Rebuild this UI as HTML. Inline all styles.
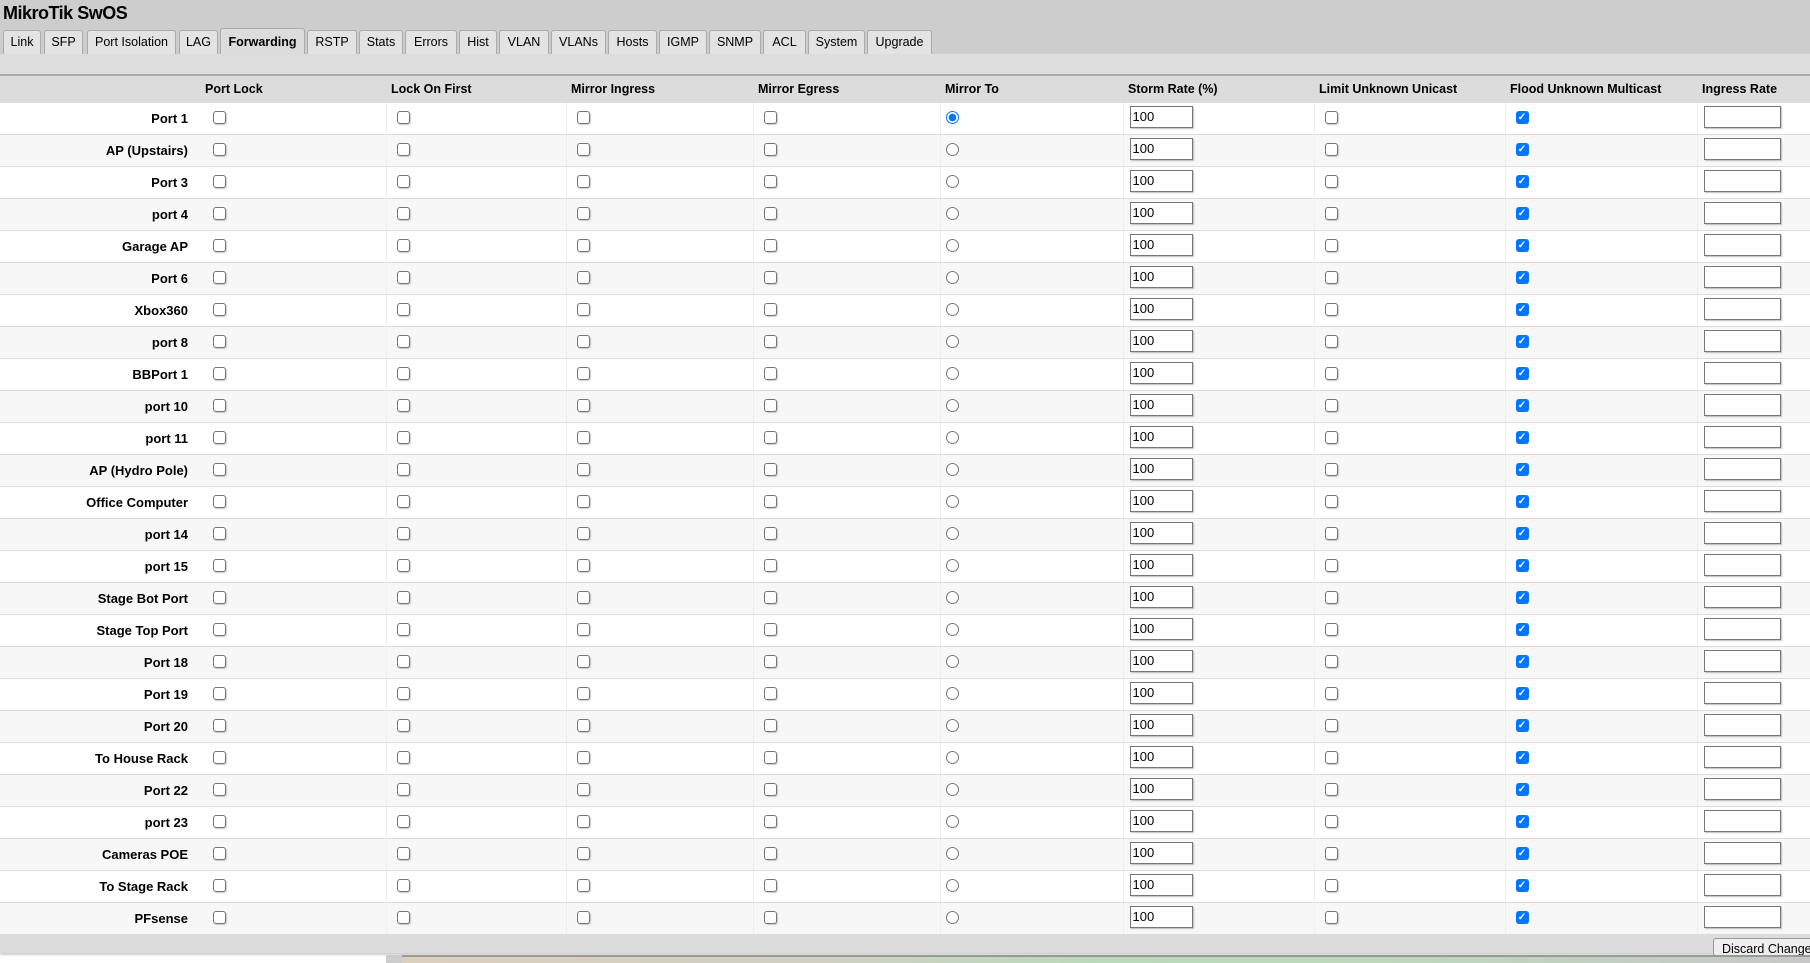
<!DOCTYPE html>
<html><head><meta charset="utf-8"><style>
*{box-sizing:border-box}
body{margin:0;width:1810px;height:963px;overflow:hidden;background:#fff;font-family:"Liberation Sans",Arial,sans-serif;font-size:13px;color:#000;position:relative}
#top{position:absolute;left:0;top:0;width:1810px;height:54px;background:#cdcdcd}
#title{position:absolute;left:3px;top:3px;font-size:18px;font-weight:bold;letter-spacing:-0.5px}
.tab{position:absolute;top:30px;height:24px;background:#e3e3e3;border:1px solid #aaa;border-bottom:none;border-radius:3px 3px 0 0;font-size:12.5px;text-align:center;line-height:22px}
.tab.a{background:#dcdcdc;font-weight:bold;top:28px;height:27px;line-height:26px}
#band{position:absolute;left:0;top:54px;width:1810px;height:22px;background:#dddddd;border-bottom:2px solid #aaa}
table{position:absolute;left:0;top:76px;width:1810px;border-collapse:collapse;table-layout:fixed}
th{height:26px;background:#dcdcdc;text-align:left;font-size:12.5px;padding:0 0 0 5px;border-bottom:1px solid #ddd}
td{height:32px;border-bottom:1px solid #ddd;border-right:1px solid #eee;padding:0 0 3px 10px;vertical-align:middle}
tr:nth-child(odd) td{background:#f7f7f7}
td.l{text-align:right;font-weight:bold;padding:0 12px 0 0;border-right:none}
td.c0{padding-left:13px}
td.r{padding-left:5px}
.cb{display:inline-block;width:13px;height:13px;border:1px solid #767676;border-radius:3px;background:#fff;vertical-align:middle;box-shadow:1px 1px 1px rgba(0,0,0,.2)}
.ck{display:inline-block;width:13px;height:13px;border-radius:3px;background:#0075ff;vertical-align:middle;color:#fff;font-size:10px;line-height:13px;text-align:center;font-weight:bold}
.rd{display:inline-block;width:13px;height:13px;border:1px solid #767676;border-radius:50%;background:#fff;vertical-align:middle}
.rd.on{border:1.5px solid #0075ff;background:radial-gradient(circle,#0075ff 0 3.5px,#fff 4px)}
.in{display:inline-block;width:63px;height:22px;border:1px solid #777;background:#fff;vertical-align:middle;line-height:20px;padding-left:2px;font-size:13px;box-shadow:1px 1px 1px rgba(0,0,0,.25)}
.in.w{width:77px}
td.s{padding-left:6px}
#bot{position:absolute;left:0;top:934px;width:1810px;height:19px;background:#dcdcdc;box-shadow:0 2px 2px rgba(0,0,0,.2)}
#btn{position:absolute;left:1713px;top:938px;width:110px;height:18px;border:1px solid #999;border-radius:3px;background:#eee;font-size:12.5px;padding:3px 0 0 8px;overflow:hidden}
#img{position:absolute;left:402px;top:955px;width:1408px;height:8px;border-top:2px solid #999;background:linear-gradient(90deg,#dccfbe 0%,#cfd0c2 30%,#b9d9b9 50%,#bdd7bb 70%,#c8c8c8 100%)}
#imgl{position:absolute;left:386px;top:955px;width:16px;height:8px;background:#ccc}
</style></head><body>
<div id="top"><div id="title">MikroTik SwOS</div>
<div class="tab" style="left:3px;width:38px">Link</div>
<div class="tab" style="left:44px;width:39px">SFP</div>
<div class="tab" style="left:87px;width:89px">Port Isolation</div>
<div class="tab" style="left:179px;width:39px">LAG</div>
<div class="tab a" style="left:220px;width:85px">Forwarding</div>
<div class="tab" style="left:307px;width:50px">RSTP</div>
<div class="tab" style="left:359px;width:44px">Stats</div>
<div class="tab" style="left:405px;width:52px">Errors</div>
<div class="tab" style="left:459px;width:38px">Hist</div>
<div class="tab" style="left:499px;width:50px">VLAN</div>
<div class="tab" style="left:551px;width:55px">VLANs</div>
<div class="tab" style="left:608px;width:49px">Hosts</div>
<div class="tab" style="left:659px;width:48px">IGMP</div>
<div class="tab" style="left:709px;width:52px">SNMP</div>
<div class="tab" style="left:763px;width:43px">ACL</div>
<div class="tab" style="left:808px;width:57px">System</div>
<div class="tab" style="left:867px;width:65px">Upgrade</div>
</div>
<div id="band"></div>
<table>
<colgroup><col style="width:200px"><col style="width:186px"><col style="width:180px"><col style="width:187px"><col style="width:187px"><col style="width:183px"><col style="width:191px"><col style="width:191px"><col style="width:192px"><col style="width:113px"></colgroup>
<tr><th></th><th>Port Lock</th><th>Lock On First</th><th>Mirror Ingress</th><th>Mirror Egress</th><th>Mirror To</th><th>Storm Rate (%)</th><th>Limit Unknown Unicast</th><th>Flood Unknown Multicast</th><th>Ingress Rate</th></tr>
<tr><td class="l">Port 1</td><td class="c0"><span class="cb"></span></td><td><span class="cb"></span></td><td><span class="cb"></span></td><td><span class="cb"></span></td><td class="r"><span class="rd on"></span></td><td class="s"><span class="in">100</span></td><td><span class="cb"></span></td><td><span class="ck">✓</span></td><td class="s"><span class="in w"></span></td></tr>
<tr><td class="l">AP (Upstairs)</td><td class="c0"><span class="cb"></span></td><td><span class="cb"></span></td><td><span class="cb"></span></td><td><span class="cb"></span></td><td class="r"><span class="rd"></span></td><td class="s"><span class="in">100</span></td><td><span class="cb"></span></td><td><span class="ck">✓</span></td><td class="s"><span class="in w"></span></td></tr>
<tr><td class="l">Port 3</td><td class="c0"><span class="cb"></span></td><td><span class="cb"></span></td><td><span class="cb"></span></td><td><span class="cb"></span></td><td class="r"><span class="rd"></span></td><td class="s"><span class="in">100</span></td><td><span class="cb"></span></td><td><span class="ck">✓</span></td><td class="s"><span class="in w"></span></td></tr>
<tr><td class="l">port 4</td><td class="c0"><span class="cb"></span></td><td><span class="cb"></span></td><td><span class="cb"></span></td><td><span class="cb"></span></td><td class="r"><span class="rd"></span></td><td class="s"><span class="in">100</span></td><td><span class="cb"></span></td><td><span class="ck">✓</span></td><td class="s"><span class="in w"></span></td></tr>
<tr><td class="l">Garage AP</td><td class="c0"><span class="cb"></span></td><td><span class="cb"></span></td><td><span class="cb"></span></td><td><span class="cb"></span></td><td class="r"><span class="rd"></span></td><td class="s"><span class="in">100</span></td><td><span class="cb"></span></td><td><span class="ck">✓</span></td><td class="s"><span class="in w"></span></td></tr>
<tr><td class="l">Port 6</td><td class="c0"><span class="cb"></span></td><td><span class="cb"></span></td><td><span class="cb"></span></td><td><span class="cb"></span></td><td class="r"><span class="rd"></span></td><td class="s"><span class="in">100</span></td><td><span class="cb"></span></td><td><span class="ck">✓</span></td><td class="s"><span class="in w"></span></td></tr>
<tr><td class="l">Xbox360</td><td class="c0"><span class="cb"></span></td><td><span class="cb"></span></td><td><span class="cb"></span></td><td><span class="cb"></span></td><td class="r"><span class="rd"></span></td><td class="s"><span class="in">100</span></td><td><span class="cb"></span></td><td><span class="ck">✓</span></td><td class="s"><span class="in w"></span></td></tr>
<tr><td class="l">port 8</td><td class="c0"><span class="cb"></span></td><td><span class="cb"></span></td><td><span class="cb"></span></td><td><span class="cb"></span></td><td class="r"><span class="rd"></span></td><td class="s"><span class="in">100</span></td><td><span class="cb"></span></td><td><span class="ck">✓</span></td><td class="s"><span class="in w"></span></td></tr>
<tr><td class="l">BBPort 1</td><td class="c0"><span class="cb"></span></td><td><span class="cb"></span></td><td><span class="cb"></span></td><td><span class="cb"></span></td><td class="r"><span class="rd"></span></td><td class="s"><span class="in">100</span></td><td><span class="cb"></span></td><td><span class="ck">✓</span></td><td class="s"><span class="in w"></span></td></tr>
<tr><td class="l">port 10</td><td class="c0"><span class="cb"></span></td><td><span class="cb"></span></td><td><span class="cb"></span></td><td><span class="cb"></span></td><td class="r"><span class="rd"></span></td><td class="s"><span class="in">100</span></td><td><span class="cb"></span></td><td><span class="ck">✓</span></td><td class="s"><span class="in w"></span></td></tr>
<tr><td class="l">port 11</td><td class="c0"><span class="cb"></span></td><td><span class="cb"></span></td><td><span class="cb"></span></td><td><span class="cb"></span></td><td class="r"><span class="rd"></span></td><td class="s"><span class="in">100</span></td><td><span class="cb"></span></td><td><span class="ck">✓</span></td><td class="s"><span class="in w"></span></td></tr>
<tr><td class="l">AP (Hydro Pole)</td><td class="c0"><span class="cb"></span></td><td><span class="cb"></span></td><td><span class="cb"></span></td><td><span class="cb"></span></td><td class="r"><span class="rd"></span></td><td class="s"><span class="in">100</span></td><td><span class="cb"></span></td><td><span class="ck">✓</span></td><td class="s"><span class="in w"></span></td></tr>
<tr><td class="l">Office Computer</td><td class="c0"><span class="cb"></span></td><td><span class="cb"></span></td><td><span class="cb"></span></td><td><span class="cb"></span></td><td class="r"><span class="rd"></span></td><td class="s"><span class="in">100</span></td><td><span class="cb"></span></td><td><span class="ck">✓</span></td><td class="s"><span class="in w"></span></td></tr>
<tr><td class="l">port 14</td><td class="c0"><span class="cb"></span></td><td><span class="cb"></span></td><td><span class="cb"></span></td><td><span class="cb"></span></td><td class="r"><span class="rd"></span></td><td class="s"><span class="in">100</span></td><td><span class="cb"></span></td><td><span class="ck">✓</span></td><td class="s"><span class="in w"></span></td></tr>
<tr><td class="l">port 15</td><td class="c0"><span class="cb"></span></td><td><span class="cb"></span></td><td><span class="cb"></span></td><td><span class="cb"></span></td><td class="r"><span class="rd"></span></td><td class="s"><span class="in">100</span></td><td><span class="cb"></span></td><td><span class="ck">✓</span></td><td class="s"><span class="in w"></span></td></tr>
<tr><td class="l">Stage Bot Port</td><td class="c0"><span class="cb"></span></td><td><span class="cb"></span></td><td><span class="cb"></span></td><td><span class="cb"></span></td><td class="r"><span class="rd"></span></td><td class="s"><span class="in">100</span></td><td><span class="cb"></span></td><td><span class="ck">✓</span></td><td class="s"><span class="in w"></span></td></tr>
<tr><td class="l">Stage Top Port</td><td class="c0"><span class="cb"></span></td><td><span class="cb"></span></td><td><span class="cb"></span></td><td><span class="cb"></span></td><td class="r"><span class="rd"></span></td><td class="s"><span class="in">100</span></td><td><span class="cb"></span></td><td><span class="ck">✓</span></td><td class="s"><span class="in w"></span></td></tr>
<tr><td class="l">Port 18</td><td class="c0"><span class="cb"></span></td><td><span class="cb"></span></td><td><span class="cb"></span></td><td><span class="cb"></span></td><td class="r"><span class="rd"></span></td><td class="s"><span class="in">100</span></td><td><span class="cb"></span></td><td><span class="ck">✓</span></td><td class="s"><span class="in w"></span></td></tr>
<tr><td class="l">Port 19</td><td class="c0"><span class="cb"></span></td><td><span class="cb"></span></td><td><span class="cb"></span></td><td><span class="cb"></span></td><td class="r"><span class="rd"></span></td><td class="s"><span class="in">100</span></td><td><span class="cb"></span></td><td><span class="ck">✓</span></td><td class="s"><span class="in w"></span></td></tr>
<tr><td class="l">Port 20</td><td class="c0"><span class="cb"></span></td><td><span class="cb"></span></td><td><span class="cb"></span></td><td><span class="cb"></span></td><td class="r"><span class="rd"></span></td><td class="s"><span class="in">100</span></td><td><span class="cb"></span></td><td><span class="ck">✓</span></td><td class="s"><span class="in w"></span></td></tr>
<tr><td class="l">To House Rack</td><td class="c0"><span class="cb"></span></td><td><span class="cb"></span></td><td><span class="cb"></span></td><td><span class="cb"></span></td><td class="r"><span class="rd"></span></td><td class="s"><span class="in">100</span></td><td><span class="cb"></span></td><td><span class="ck">✓</span></td><td class="s"><span class="in w"></span></td></tr>
<tr><td class="l">Port 22</td><td class="c0"><span class="cb"></span></td><td><span class="cb"></span></td><td><span class="cb"></span></td><td><span class="cb"></span></td><td class="r"><span class="rd"></span></td><td class="s"><span class="in">100</span></td><td><span class="cb"></span></td><td><span class="ck">✓</span></td><td class="s"><span class="in w"></span></td></tr>
<tr><td class="l">port 23</td><td class="c0"><span class="cb"></span></td><td><span class="cb"></span></td><td><span class="cb"></span></td><td><span class="cb"></span></td><td class="r"><span class="rd"></span></td><td class="s"><span class="in">100</span></td><td><span class="cb"></span></td><td><span class="ck">✓</span></td><td class="s"><span class="in w"></span></td></tr>
<tr><td class="l">Cameras POE</td><td class="c0"><span class="cb"></span></td><td><span class="cb"></span></td><td><span class="cb"></span></td><td><span class="cb"></span></td><td class="r"><span class="rd"></span></td><td class="s"><span class="in">100</span></td><td><span class="cb"></span></td><td><span class="ck">✓</span></td><td class="s"><span class="in w"></span></td></tr>
<tr><td class="l">To Stage Rack</td><td class="c0"><span class="cb"></span></td><td><span class="cb"></span></td><td><span class="cb"></span></td><td><span class="cb"></span></td><td class="r"><span class="rd"></span></td><td class="s"><span class="in">100</span></td><td><span class="cb"></span></td><td><span class="ck">✓</span></td><td class="s"><span class="in w"></span></td></tr>
<tr><td class="l">PFsense</td><td class="c0"><span class="cb"></span></td><td><span class="cb"></span></td><td><span class="cb"></span></td><td><span class="cb"></span></td><td class="r"><span class="rd"></span></td><td class="s"><span class="in">100</span></td><td><span class="cb"></span></td><td><span class="ck">✓</span></td><td class="s"><span class="in w"></span></td></tr>
</table>
<div id="bot"></div>
<div id="btn">Discard Changes</div>
<div id="imgl"></div><div id="img"></div>
</body></html>
